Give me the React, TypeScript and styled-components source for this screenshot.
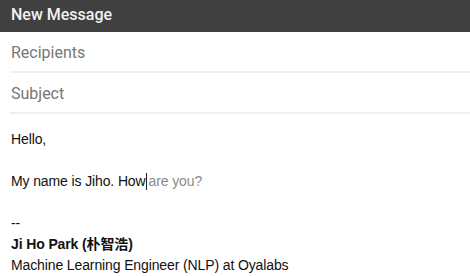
import styled, { createGlobalStyle } from "styled-components";

const GlobalStyle = createGlobalStyle`
  html, body {
    margin: 0;
    padding: 0;
    background: #ffffff;
  }
`;

const Window = styled.div`
  width: 470px;
  height: 276px;
  overflow: hidden;
  background: #fff;
  display: flex;
  flex-direction: column;
`;

const Header = styled.div`
  height: 33px;
  background: #404040;
  color: #f2f2f2;
  font-family: Roboto, "Noto Sans", sans-serif;
  font-weight: 500;
  font-size: 16px;
  padding: 0 11px;
  display: flex;
  align-items: center;
  padding-bottom: 2px;
  box-sizing: border-box;
`;

const Field = styled.div`
  height: 42px;
  margin-left: 10px;
  padding: 11px 1px 0;
  box-sizing: border-box;
  border-bottom: 2px solid #efefef;
  font-family: Roboto, "Noto Sans", sans-serif;
  font-size: 16px;
  color: #777;
`;

const Body = styled.div`
  padding: 15px 11px 0;
  font-family: "Liberation Sans", Arial, "Noto Sans CJK SC", sans-serif;
  font-size: 14px;
  line-height: 21px;
  letter-spacing: -0.12px;
  color: #111;
`;

const Line = styled.div<{ $bold?: boolean }>`
  min-height: 21px;
  font-weight: ${(p) => (p.$bold ? 700 : 400)};
  white-space: nowrap;
`;

const Caret = styled.span`
  display: inline-block;
  width: 1px;
  height: 17px;
  background: #222;
  vertical-align: -4px;
  margin: 0 2px 0 0;
`;

const Suggestion = styled.span`
  color: #8a8a8a;
`;

export default function App() {
  return (
    <>
      <GlobalStyle />
      <Window>
        <Header>New Message</Header>
        <Field>Recipients</Field>
        <Field>Subject</Field>
        <Body>
          <Line>Hello,</Line>
          <Line />
          <Line>
            My name is Jiho. How
            <Caret />
            <Suggestion>are you?</Suggestion>
          </Line>
          <Line />
          <Line>--</Line>
          <Line $bold>Ji Ho Park (朴智浩)</Line>
          <Line>Machine Learning Engineer (NLP) at Oyalabs</Line>
        </Body>
      </Window>
    </>
  );
}
